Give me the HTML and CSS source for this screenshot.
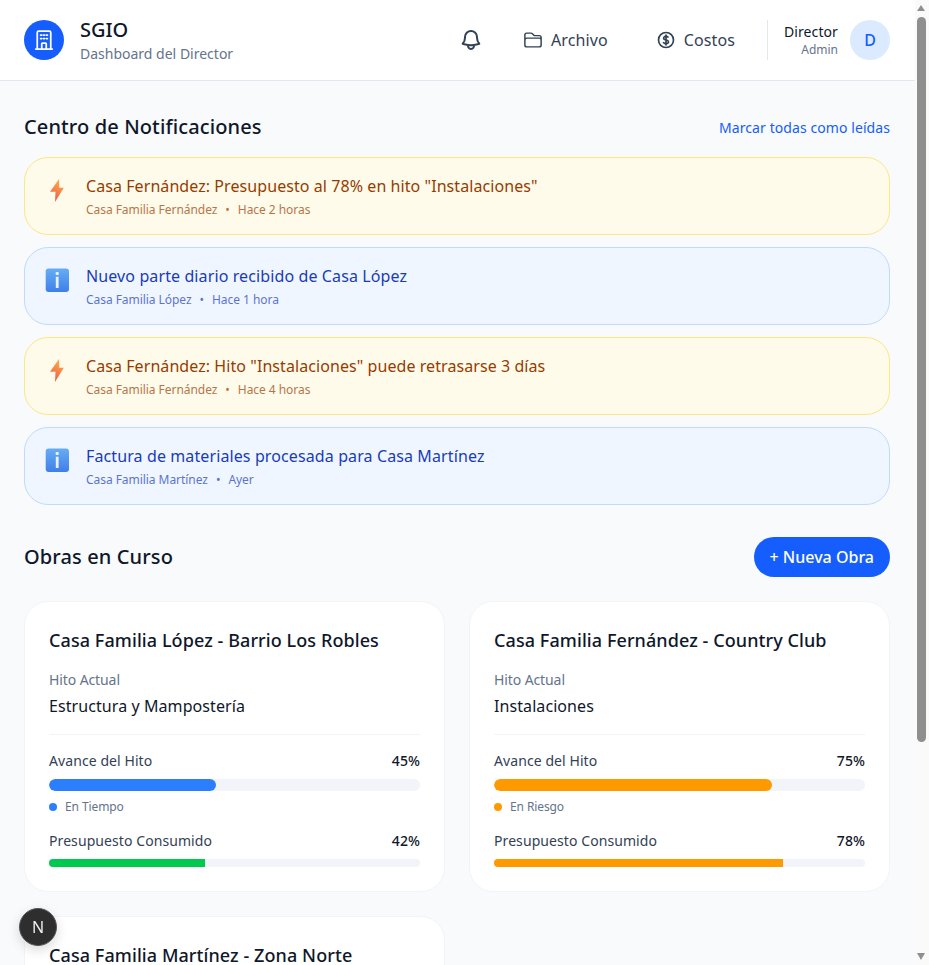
FILE: index.html
```html
<!DOCTYPE html>
<html lang="es">

<head>
  <meta charset="UTF-8">
  <meta name="viewport" content="width=device-width, initial-scale=1.0">
  <title>SGIO - Dashboard del Director</title>
  <link rel="stylesheet" href="styles.css">
</head>

<body>

  <header class="topbar">
    <div class="brand">
      <div class="brand-icon">
        <svg width="24" height="24" viewBox="0 0 24 24" fill="none" stroke="currentColor" stroke-width="1.75" stroke-linecap="round" stroke-linejoin="round">
          <path d="M3.75 21h16.5"/>
          <path d="M5.25 21V4.5A1.5 1.5 0 0 1 6.75 3h10.5a1.5 1.5 0 0 1 1.5 1.5V21"/>
          <path d="M8.6 7h1M11.5 7h1M14.4 7h1M8.6 10.5h1M11.5 10.5h1M14.4 10.5h1"/>
          <path d="M9.75 21v-5.25a.75.75 0 0 1 .75-.75h3a.75.75 0 0 1 .75.75V21"/>
        </svg>
      </div>
      <div>
        <div class="brand-name">SGIO</div>
        <div class="brand-sub">Dashboard del Director</div>
      </div>
    </div>
    <nav class="topnav">
      <span class="bell">
        <svg width="24" height="24" viewBox="0 0 24 24" fill="none" stroke="currentColor" stroke-width="2" stroke-linecap="round" stroke-linejoin="round">
          <path d="M14.857 17.082a23.848 23.848 0 0 0 5.454-1.31A8.967 8.967 0 0 1 18 9.75V9A6 6 0 0 0 6 9v.75a8.967 8.967 0 0 1-2.312 6.022c1.733.64 3.56 1.085 5.455 1.31m5.714 0a24.255 24.255 0 0 1-5.714 0m5.714 0a3 3 0 1 1-5.714 0"/>
        </svg>
      </span>
      <a class="nav-link" href="#">
        <svg width="20" height="20" viewBox="0 0 24 24" fill="none" stroke="currentColor" stroke-width="1.75" stroke-linecap="round" stroke-linejoin="round">
          <path d="M2.25 12.75V12A2.25 2.25 0 0 1 4.5 9.75h15A2.25 2.25 0 0 1 21.75 12v.75m-8.69-6.44-2.12-2.12a1.5 1.5 0 0 0-1.061-.44H4.5A2.25 2.25 0 0 0 2.25 6v12a2.25 2.25 0 0 0 2.25 2.25h15A2.25 2.25 0 0 0 21.75 18V9a2.25 2.25 0 0 0-2.25-2.25h-5.379a1.5 1.5 0 0 1-1.06-.44Z"/>
        </svg>
        Archivo
      </a>
      <a class="nav-link" href="#">
        <svg width="20" height="20" viewBox="0 0 24 24" fill="none" stroke="currentColor" stroke-width="2" stroke-linecap="round" stroke-linejoin="round">
          <path d="M12 6v12m-3-2.818.879.659c1.171.879 3.07.879 4.242 0 1.172-.879 1.172-2.303 0-3.182C13.536 12.219 12.768 12 12 12c-.725 0-1.45-.22-2.003-.659-1.106-.879-1.106-2.303 0-3.182s2.9-.879 4.006 0l.415.33M21 12a9 9 0 1 1-18 0 9 9 0 0 1 18 0Z"/>
        </svg>
        Costos
      </a>
      <div class="user">
        <div class="user-text">
          <div class="user-name">Director</div>
          <div class="user-role">Admin</div>
        </div>
        <div class="avatar">D</div>
      </div>
    </nav>
  </header>

  <main class="content">
    <div class="section-head notif-head">
      <h2>Centro de Notificaciones</h2>
      <a class="mark-read" href="#">Marcar todas como leídas</a>
    </div>

    <div class="notif-list">
      <div class="notif warn">
        <svg class="notif-icon" width="25" height="25" viewBox="0 0 25 25"><use href="#bolt"/></svg>
        <div>
          <div class="notif-title">Casa Fernández: Presupuesto al 78% en hito "Instalaciones"</div>
          <div class="notif-meta"><span>Casa Familia Fernández</span><span>•</span><span>Hace 2 horas</span></div>
        </div>
      </div>
      <div class="notif info">
        <svg class="notif-icon" width="25" height="25" viewBox="0 0 25 25"><use href="#info"/></svg>
        <div>
          <div class="notif-title">Nuevo parte diario recibido de Casa López</div>
          <div class="notif-meta"><span>Casa Familia López</span><span>•</span><span>Hace 1 hora</span></div>
        </div>
      </div>
      <div class="notif warn">
        <svg class="notif-icon" width="25" height="25" viewBox="0 0 25 25"><use href="#bolt"/></svg>
        <div>
          <div class="notif-title">Casa Fernández: Hito "Instalaciones" puede retrasarse 3 días</div>
          <div class="notif-meta"><span>Casa Familia Fernández</span><span>•</span><span>Hace 4 horas</span></div>
        </div>
      </div>
      <div class="notif info">
        <svg class="notif-icon" width="25" height="25" viewBox="0 0 25 25"><use href="#info"/></svg>
        <div>
          <div class="notif-title">Factura de materiales procesada para Casa Martínez</div>
          <div class="notif-meta"><span>Casa Familia Martínez</span><span>•</span><span>Ayer</span></div>
        </div>
      </div>
    </div>

    <div class="section-head works-head">
      <h2>Obras en Curso</h2>
      <button class="new-btn">+ Nueva Obra</button>
    </div>

    <div class="works">
      <div class="card">
        <h3>Casa Familia López - Barrio Los Robles</h3>
        <div class="milestone">
          <div class="milestone-label">Hito Actual</div>
          <div class="milestone-name">Estructura y Mampostería</div>
        </div>
        <div class="metric-row"><span>Avance del Hito</span><b>45%</b></div>
        <div class="bar big"><div class="fill round blue" style="width: 45%"></div></div>
        <div class="status"><i class="dot blue"></i>En Tiempo</div>
        <div class="metric-row"><span>Presupuesto Consumido</span><b>42%</b></div>
        <div class="bar"><div class="fill green" style="width: 42%"></div></div>
      </div>

      <div class="card">
        <h3>Casa Familia Fernández - Country Club</h3>
        <div class="milestone">
          <div class="milestone-label">Hito Actual</div>
          <div class="milestone-name">Instalaciones</div>
        </div>
        <div class="metric-row"><span>Avance del Hito</span><b>75%</b></div>
        <div class="bar big"><div class="fill round orange" style="width: 75%"></div></div>
        <div class="status"><i class="dot orange"></i>En Riesgo</div>
        <div class="metric-row"><span>Presupuesto Consumido</span><b>78%</b></div>
        <div class="bar"><div class="fill orange" style="width: 78%"></div></div>
      </div>

      <div class="card">
        <h3>Casa Familia Martínez - Zona Norte</h3>
      </div>
    </div>
  </main>

  <div class="dev-badge">N</div>

  <div class="fake-scroll">
    <div class="arrow up"></div>
    <div class="thumb"></div>
    <div class="arrow down"></div>
  </div>

  <svg width="0" height="0" class="defs">
    <defs>
      <linearGradient id="boltGrad" x1="0.7" y1="0" x2="0.4" y2="1">
        <stop offset="0" stop-color="#fdb04a"/>
        <stop offset="1" stop-color="#ee5a48"/>
      </linearGradient>
      <linearGradient id="infoGrad" x1="0" y1="0" x2="0" y2="1">
        <stop offset="0" stop-color="#66adf5"/>
        <stop offset="1" stop-color="#3f7fe8"/>
      </linearGradient>
      <symbol id="bolt" viewBox="0 0 25 25">
        <path d="M14 1 L5 13.7 H10.5 L10 24 L18.8 9.7 H14.3 Z" fill="url(#boltGrad)"/>
      </symbol>
      <symbol id="info" viewBox="0 0 25 25">
        <rect x="0.7" y="0.5" width="23.3" height="23.5" rx="3" fill="url(#infoGrad)"/>
        <rect x="10.6" y="4" width="3.2" height="3" rx="1" fill="#e8f1fd"/>
        <rect x="10.8" y="8.7" width="2.8" height="11.3" fill="#e8f1fd"/>
      </symbol>
    </defs>
  </svg>

</body>

</html>
```

FILE: styles.css
```css
* {
  box-sizing: border-box;
}

html {
  scrollbar-width: none;
}

html::-webkit-scrollbar {
  display: none;
}

body {
  margin: 0;
  padding-right: 14px;
  height: 965px;
  overflow: hidden;
  font-family: "Noto Sans", Arial, sans-serif;
  background-color: #f8fafc;
  color: #0f172a;
}

.defs {
  position: absolute;
}

/* header */
.topbar {
  display: flex;
  justify-content: space-between;
  align-items: center;
  height: 81px;
  padding: 0 25px 0 24px;
  background-color: white;
  border-bottom: 1px solid #e2e8f0;
}

.brand {
  display: flex;
  align-items: center;
  gap: 16px;
}

.brand-icon {
  display: flex;
  align-items: center;
  justify-content: center;
  width: 40px;
  height: 40px;
  border-radius: 50%;
  background-color: #155dfc;
  color: white;
}

.brand-name {
  font-size: 20px;
  font-weight: 500;
  line-height: 28px;
}

.brand-sub {
  font-size: 14px;
  line-height: 20px;
  color: #64748b;
}

.topnav {
  display: flex;
  align-items: center;
  color: #334155;
}

.bell {
  display: flex;
  margin-right: 40px;
}

.nav-link {
  display: flex;
  align-items: center;
  gap: 8px;
  margin-right: 48px;
  font-size: 16px;
  letter-spacing: .1px;
  color: #334155;
  text-decoration: none;
}

.nav-link:nth-child(3) {
  margin-right: 32px;
}

.user {
  display: flex;
  align-items: center;
  gap: 12px;
  height: 40px;
  padding-left: 16px;
  border-left: 1px solid #e2e8f0;
}

.user-text {
  text-align: right;
}

.user-name {
  font-size: 14px;
  line-height: 20px;
  letter-spacing: .1px;
  color: #0f172a;
}

.user-role {
  font-size: 12px;
  line-height: 16px;
  color: #64748b;
}

.avatar {
  display: flex;
  align-items: center;
  justify-content: center;
  width: 40px;
  height: 40px;
  border-radius: 50%;
  background-color: #dbeafe;
  color: #155dfc;
  font-size: 16px;
  font-weight: 500;
}

/* main */
.content {
  padding: 32px 25px 0 24px;
}

.section-head {
  display: flex;
  justify-content: space-between;
  align-items: center;
}

.section-head h2 {
  margin: 0;
  font-size: 20px;
  font-weight: 500;
  line-height: 28px;
  letter-spacing: .12px;
}

.notif-head {
  margin-bottom: 16px;
}

.mark-read {
  font-size: 14px;
  letter-spacing: .08px;
  color: #155dfc;
  text-decoration: none;
}

.notif-list {
  display: flex;
  flex-direction: column;
  gap: 12px;
}

.notif {
  display: flex;
  align-items: flex-start;
  gap: 16px;
  height: 78px;
  padding: 16px 20px;
  border: 1px solid;
  border-radius: 24px;
}

.notif-icon {
  flex: none;
  margin-top: 4px;
}

.notif.warn {
  background-color: #fffbeb;
  border-color: #fee685;
}

.notif.info {
  background-color: #eff6ff;
  border-color: #bedbff;
}

.notif-title {
  font-size: 16px;
  line-height: 24px;
  letter-spacing: .07px;
}

.warn .notif-title {
  color: #973c00;
}

.info .notif-title {
  color: #193cb8;
  letter-spacing: .11px;
}

.notif-meta {
  display: flex;
  gap: 8px;
  margin-top: 4px;
  font-size: 12px;
  line-height: 16px;
  letter-spacing: -.05px;
  opacity: .7;
}

.warn .notif-meta {
  color: #973c00;
}

.info .notif-meta {
  color: #193cb8;
}

.works-head {
  margin-top: 32px;
  margin-bottom: 24px;
}

.new-btn {
  height: 40px;
  padding: 0 16px;
  border: none;
  border-radius: 20px;
  background-color: #155dfc;
  color: white;
  font-family: inherit;
  font-size: 16px;
  font-weight: 500;
}

.works {
  display: grid;
  grid-template-columns: 1fr 1fr;
  gap: 24px;
}

.card {
  padding: 24px;
  height: 291px;
  background-color: white;
  border: 1px solid #f1f5f9;
  border-radius: 24px;
}

.card h3 {
  margin: 0 0 16px;
  font-size: 18px;
  font-weight: 500;
  line-height: 28px;
  letter-spacing: .08px;
}

.milestone {
  padding-bottom: 16px;
  margin-bottom: 16px;
  border-bottom: 1px solid #f1f5f9;
}

.milestone-label {
  font-size: 14px;
  line-height: 20px;
  letter-spacing: -.1px;
  color: #64748b;
  margin-bottom: 4px;
}

.milestone-name {
  font-size: 16px;
  line-height: 24px;
  letter-spacing: .08px;
}

.metric-row {
  display: flex;
  justify-content: space-between;
  font-size: 14px;
  line-height: 20px;
  letter-spacing: .08px;
  color: #334155;
  margin-bottom: 8px;
}

.metric-row b {
  font-weight: 500;
  color: #0f172a;
}

.bar {
  height: 8px;
  overflow: hidden;
  border-radius: 999px;
  background-color: #f1f5f9;
}

.bar.big {
  height: 12px;
}

.fill {
  height: 100%;
}

.fill.round {
  border-radius: 999px;
}

.blue {
  background-color: #2b7fff;
}

.green {
  background-color: #00c950;
}

.orange {
  background-color: #fe9a00;
}

.status {
  display: flex;
  align-items: center;
  gap: 8px;
  margin: 8px 0 16px;
  font-size: 12px;
  line-height: 16px;
  letter-spacing: -.1px;
  color: #64748b;
}

.dot {
  width: 8px;
  height: 8px;
  border-radius: 50%;
}

/* floating things */
.dev-badge {
  position: fixed;
  left: 19px;
  top: 908px;
  display: flex;
  align-items: center;
  justify-content: center;
  width: 38px;
  height: 38px;
  border-radius: 50%;
  background-color: #2e2e2e;
  border: 1px solid #555;
  color: #eee;
  font-size: 16px;
  font-weight: 400;
  box-shadow: 0 4px 12px rgba(0, 0, 0, .15);
}

.fake-scroll {
  position: fixed;
  top: 0;
  right: 0;
  bottom: 0;
  width: 14px;
  display: flex;
  flex-direction: column;
  background-color: #fafafa;
}

.thumb {
  height: 725px;
  margin: 0 3px 206px 2px;
  border-radius: 5px;
  background-color: #8f8f8f;
}

.arrow {
  height: 17px;
  flex: none;
  position: relative;
}

.arrow.up::before,
.arrow.down::before {
  content: "";
  position: absolute;
  left: 2px;
  border-left: 4.5px solid transparent;
  border-right: 4.5px solid transparent;
}

.arrow.up::before {
  top: 5px;
  border-bottom: 6px solid #8f8f8f;
}

.arrow.down::before {
  top: 5px;
  border-top: 7px solid #8f8f8f;
}
```
